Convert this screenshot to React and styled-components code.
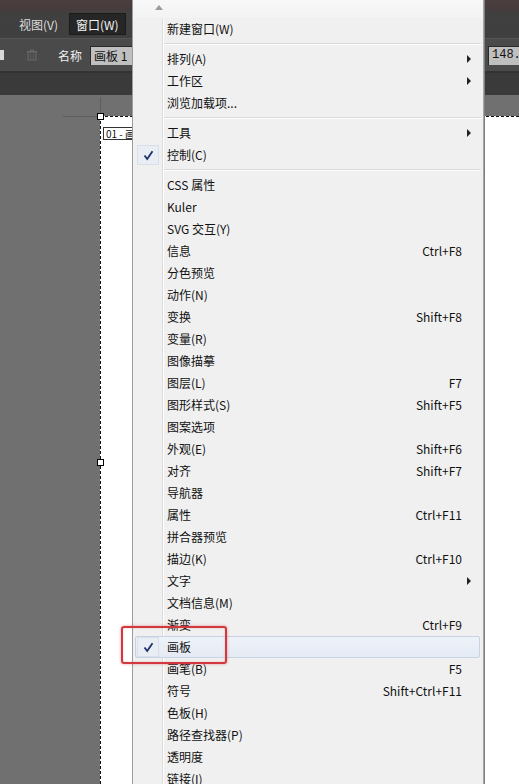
import React from 'react'
import styled, { createGlobalStyle } from 'styled-components'

const GlobalStyle = createGlobalStyle`
  body {
    margin: 0;
    overflow: hidden;
    font-family: "Noto Sans CJK SC", "Noto Sans", sans-serif;
  }
`

const Screen = styled.div`
  position: relative;
  width: 519px;
  height: 784px;
  overflow: hidden;
  display: flex;
  flex-direction: column;
  background: #707070;
`

const AppMenuBar = styled.div`
  height: 38px;
  flex-shrink: 0;
  display: flex;
  align-items: flex-start;
  gap: 4px;
  padding: 13px 0 0 12px;
  box-sizing: border-box;
  background: linear-gradient(#4b3e3f 0, #463c3d 9px, #404040 14px, #3f3f3f);
`

const AppMenuItem = styled.div`
  height: 22px;
  padding: 0 6px;
  display: flex;
  align-items: center;
  font-size: 12px;
  color: ${p => (p.$open ? '#f4f4f4' : '#dedede')};
  background: ${p => (p.$open ? '#262626' : 'transparent')};
  border: 1px solid ${p => (p.$open ? '#1b1b1b' : 'transparent')};
  box-sizing: border-box;
`

const ControlBar = styled.div`
  height: 35px;
  flex-shrink: 0;
  display: flex;
  align-items: center;
  background: #4a4a4a;
  border-top: 1px solid #555;
  border-bottom: 2px solid #333;
  box-sizing: border-box;
`

const IconStub = styled.div`
  width: 4px;
  height: 10px;
  background: #d8d8d8;
  margin-right: 22px;
`

const TrashIcon = styled.svg`
  width: 12px;
  height: 12px;
  margin-right: 20px;
`

const FieldLabel = styled.span`
  font-size: 12px;
  color: #f0f0f0;
  margin-right: 8px;
`

const NameField = styled.div`
  width: ${p => p.$w}px;
  height: 19px;
  flex-shrink: 0;
  background: #bfbfbf;
  border-top: 1px solid #2a2a2a;
  border-left: 1px solid #2a2a2a;
  box-sizing: border-box;
  font-size: 12px;
  color: #111;
  padding-left: 3px;
  line-height: 17px;
  white-space: nowrap;
  font-family: ${p => (p.$mono ? '"Liberation Mono", monospace' : 'inherit')};
`

const Spacer = styled.div`
  flex: 1;
`

const TabStrip = styled.div`
  height: 22px;
  flex-shrink: 0;
  background: #3a3a3a;
`

const Workspace = styled.div`
  flex: 1;
  display: flex;
  padding: 21px 0 0 100px;
`

const Artboard = styled.div`
  position: relative;
  flex: 1;
  background: #fff;
  border-left: 1px dashed #111;
  border-top: 1px dashed #111;
  padding: 2px 0 0 2px;

  &::before {
    content: '';
    position: absolute;
    left: -1px;
    top: -20px;
    width: 1px;
    height: 16px;
    background: #5e5e5e;
  }
  &::after {
    content: '';
    position: absolute;
    left: -38px;
    top: -1px;
    width: 34px;
    height: 1px;
    background: #5e5e5e;
  }
`

const Handle = styled.div`
  position: absolute;
  left: -4px;
  top: ${p => p.$top}px;
  width: 7px;
  height: 7px;
  background: #fff;
  border: 1px solid #000;
  box-sizing: border-box;
`

const BoardLabel = styled.span`
  display: inline-block;
  font-size: 10px;
  line-height: 11px;
  padding: 0 2px;
  border: 1px solid #333;
  color: #111;
`

const Menu = styled.div`
  position: absolute;
  left: 132px;
  top: 0;
  bottom: 0;
  width: 352px;
  box-sizing: border-box;
  border-left: 1px solid #9c9c9c;
  border-right: 1px solid #a6a6a6;
  box-shadow: 1px 0 0 #7e7e7e;
  background:
    linear-gradient(to right, transparent 29px, #dcdcdc 29px, #dcdcdc 30px, #fff 30px, #fff 31px, transparent 31px),
    #f0f0f0;
  overflow: hidden;
`

const ScrollTop = styled.div`
  height: 18px;
  box-sizing: border-box;
  padding: 5px 0 0 22px;
  background: linear-gradient(#f8f8f8, #f3f3f3);
`

const UpArrow = styled.div`
  width: 0;
  height: 0;
  border-left: 4px solid transparent;
  border-right: 4px solid transparent;
  border-bottom: 5px solid #9c9c9c;
`

const Row = styled.div`
  height: 22px;
  margin: 0 3px 0 2px;
  box-sizing: border-box;
  display: grid;
  grid-template-columns: 26px 1fr auto 17px;
  align-items: center;
  font-size: 12px;
  color: #111;
  border: 1px solid ${p => (p.$active ? '#c8d3e4' : 'transparent')};
  border-radius: 2px;
  background: ${p => (p.$active ? 'linear-gradient(#eef2f9, #e4eaf4)' : 'transparent')};
`

const IconCell = styled.div`
  height: 20px;
  display: flex;
  align-items: center;
`

const CheckBox = styled.div`
  width: 22px;
  height: 20px;
  margin-left: 1px;
  box-sizing: border-box;
  display: flex;
  align-items: center;
  justify-content: center;
  border: 1px solid #d8dfea;
  background: #e9eef5;
`

const Label = styled.span`
  padding-left: 5px;
  white-space: nowrap;
  line-height: 20px;
`

const Shortcut = styled.span`
  white-space: nowrap;
  line-height: 20px;
`

const SubArrow = styled.div`
  width: 0;
  height: 0;
  margin-left: 5px;
  border-top: 4px solid transparent;
  border-bottom: 4px solid transparent;
  border-left: 4px solid #222;
`

const Separator = styled.div`
  height: 8px;
  margin: 0 2px 0 31px;
  display: flex;
  flex-direction: column;
  justify-content: center;

  &::before {
    content: '';
    height: 1px;
    background: #d9d9d9;
  }
  &::after {
    content: '';
    height: 1px;
    background: #fff;
  }
`

const Annotation = styled.div`
  position: absolute;
  left: 121px;
  top: 626px;
  width: 106px;
  height: 38px;
  box-sizing: border-box;
  border: 2px solid #d2383f;
  border-radius: 3px;
  box-shadow: 0 0 3px rgba(210, 40, 50, 0.45), inset 0 0 2px rgba(210, 40, 50, 0.3);
`

const menu = [
  { label: '新建窗口(W)' },
  'sep',
  { label: '排列(A)', sub: true },
  { label: '工作区', sub: true },
  { label: '浏览加载项...' },
  'sep',
  { label: '工具', sub: true },
  { label: '控制(C)', checked: true },
  'sep',
  { label: 'CSS 属性' },
  { label: 'Kuler' },
  { label: 'SVG 交互(Y)' },
  { label: '信息', key: 'Ctrl+F8' },
  { label: '分色预览' },
  { label: '动作(N)' },
  { label: '变换', key: 'Shift+F8' },
  { label: '变量(R)' },
  { label: '图像描摹' },
  { label: '图层(L)', key: 'F7' },
  { label: '图形样式(S)', key: 'Shift+F5' },
  { label: '图案选项' },
  { label: '外观(E)', key: 'Shift+F6' },
  { label: '对齐', key: 'Shift+F7' },
  { label: '导航器' },
  { label: '属性', key: 'Ctrl+F11' },
  { label: '拼合器预览' },
  { label: '描边(K)', key: 'Ctrl+F10' },
  { label: '文字', sub: true },
  { label: '文档信息(M)' },
  { label: '渐变', key: 'Ctrl+F9' },
  { label: '画板', checked: true, active: true },
  { label: '画笔(B)', key: 'F5' },
  { label: '符号', key: 'Shift+Ctrl+F11' },
  { label: '色板(H)' },
  { label: '路径查找器(P)' },
  { label: '透明度' },
  { label: '链接(I)' },
]

const Check = () => (
  <svg width="11" height="11" viewBox="0 0 11 11">
    <path d="M1.5 5.5 L4.2 9 L9.5 1.2" fill="none" stroke="#1f2f6c" strokeWidth="1.8" />
  </svg>
)

const App = () => {
  return (
    <Screen>
      <GlobalStyle />
      <AppMenuBar>
        <AppMenuItem>视图(V)</AppMenuItem>
        <AppMenuItem $open>窗口(W)</AppMenuItem>
      </AppMenuBar>
      <ControlBar>
        <IconStub />
        <TrashIcon viewBox="0 0 12 12">
          <rect x="2" y="3" width="8" height="8" fill="none" stroke="#6b6b6b" />
          <path d="M1 2.5 H11 M4 1 H8" stroke="#6b6b6b" />
          <path d="M4.5 4.5 V10 M7.5 4.5 V10" stroke="#5d5d5d" />
        </TrashIcon>
        <FieldLabel>名称</FieldLabel>
        <NameField $w={80}>画板 1</NameField>
        <Spacer />
        <NameField $w={45} $mono style={{ marginRight: -14 }}>148.5</NameField>
      </ControlBar>
      <TabStrip />
      <Workspace>
        <Artboard>
          <Handle $top={-4} />
          <Handle $top={342} />
          <BoardLabel>01 - 画板 1</BoardLabel>
        </Artboard>
      </Workspace>

      <Menu>
        <ScrollTop>
          <UpArrow />
        </ScrollTop>
        {menu.map((item, i) =>
          item === 'sep' ? (
            <Separator key={i} />
          ) : (
            <Row key={i} $active={item.active}>
              <IconCell>
                {item.checked && (
                  <CheckBox>
                    <Check />
                  </CheckBox>
                )}
              </IconCell>
              <Label>{item.label}</Label>
              <Shortcut>{item.key}</Shortcut>
              <div>{item.sub && <SubArrow />}</div>
            </Row>
          )
        )}
      </Menu>
      <Annotation />
    </Screen>
  )
}

export default App
